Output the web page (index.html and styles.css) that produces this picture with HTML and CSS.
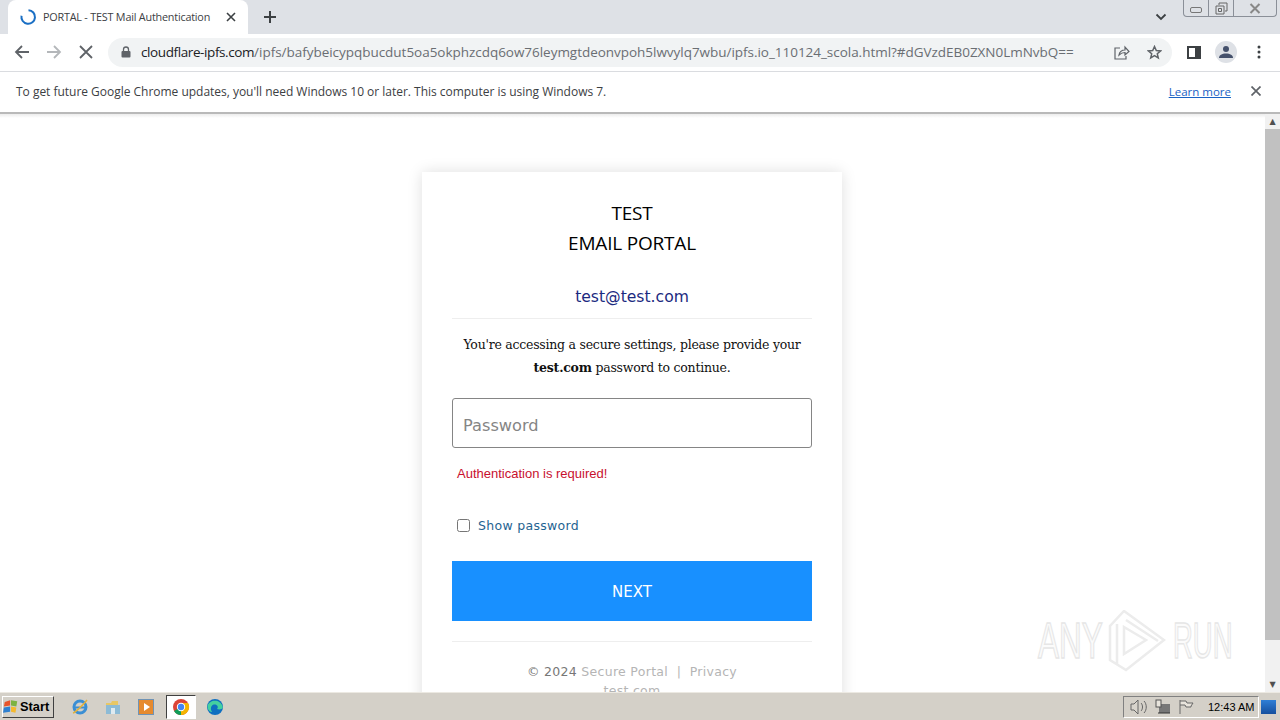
FILE: index.html
```html
<!DOCTYPE html>
<html>
<head>
    <meta http-equiv="Content-Type" content="text/html; charset=UTF-8">
    <title>PORTAL - TEST Mail Authentication</title>
    <link rel="stylesheet" href="styles.css">
</head>
<body>
    <div class="tabstrip">
        <div class="tab">
            <svg class="spinner" width="18" height="18" viewBox="0 0 18 18"><path d="M9.5 2.2a6.8 6.8 0 1 1-7 5.6" fill="none" stroke="#1a6fc4" stroke-width="2"/></svg>
            <span class="tab-title">PORTAL - TEST Mail Authentication</span>
            <svg class="tab-close" width="10" height="10" viewBox="0 0 10 10"><path d="M1 1l8 8M9 1l-8 8" stroke="#3c4043" stroke-width="1.6"/></svg>
        </div>
        <svg class="new-tab" width="14" height="14" viewBox="0 0 14 14"><path d="M7 1v12M1 7h12" stroke="#3c4043" stroke-width="2"/></svg>
        <svg class="tab-list" width="12" height="8" viewBox="0 0 12 8"><path d="M1.5 1.5L6 6l4.500-4.500" fill="none" stroke="#3c4043" stroke-width="1.800"/></svg>
        <div class="window-buttons">
            <div class="win-btn win-min"><svg width="12" height="6" viewBox="0 0 12 6"><rect x="0.500" y="0.500" width="11" height="5" rx="1.500" fill="none" stroke="#777"/></svg></div>
            <div class="win-btn win-max"><svg width="13" height="13" viewBox="0 0 13 13"><path d="M4 3V1h8v8h-2M1 4h8v8H1zM3.500 6.500h3v3h-3z" fill="none" stroke="#666"/></svg></div>
            <div class="win-btn win-close"><svg width="12" height="11" viewBox="0 0 12 11"><path d="M1.500 1l9 9M10.500 1l-9 9" stroke="#888" stroke-width="2"/></svg></div>
        </div>
    </div>

    <div class="toolbar">
        <svg class="nav-icon" width="16" height="16" viewBox="0 0 16 16"><path d="M15 8H2M8 2L2 8l6 6" fill="none" stroke="#5f6368" stroke-width="1.800"/></svg>
        <svg class="nav-icon" width="16" height="16" viewBox="0 0 16 16"><path d="M1 8h13M8 2l6 6-6 6" fill="none" stroke="#b4b7ba" stroke-width="1.800"/></svg>
        <svg class="nav-icon" width="14" height="14" viewBox="0 0 14 14"><path d="M1 1l12 12M13 1L1 13" stroke="#5f6368" stroke-width="1.800"/></svg>
        <div class="omnibox">
            <svg class="lock" width="10" height="12" viewBox="0 0 10 12"><path d="M2.500 5V3.500a2.500 2.500 0 0 1 5 0V5" fill="none" stroke="#5f6368" stroke-width="1.300"/><rect x="0.500" y="5" width="9" height="6.500" rx="1" fill="#5f6368"/></svg>
            <span class="url"><span class="url-host">cloudflare-ipfs.com</span>/ipfs/bafybeicypqbucdut5oa5okphzcdq6ow76leymgtdeonvpoh5lwvylq7wbu/ipfs.io_110124_scola.html?#dGVzdEB0ZXN0LmNvbQ==</span>
            <svg class="omni-icon" width="16" height="15" viewBox="0 0 16 15"><path d="M6 3H1v11h11v-3M5 10c.5-3 3-5 6-5V2l4 4.500-4 3.500V7.500c-2.500 0-4.500 1-6 2.500z" fill="none" stroke="#5f6368" stroke-width="1.200"/></svg>
            <svg class="omni-icon omni-star" width="15" height="15" viewBox="0 0 15 15"><path d="M7.500 1.500l1.800 4 4.300.4-3.300 2.900 1 4.200-3.800-2.300-3.800 2.300 1-4.200L1.400 5.900l4.300-.4z" fill="none" stroke="#5f6368" stroke-width="1.500"/></svg>
        </div>
        <svg class="panel-icon" width="14" height="13" viewBox="0 0 14 13"><rect x="1" y="1" width="12" height="11" fill="none" stroke="#3c4043" stroke-width="2"/><rect x="8" y="1" width="5" height="11" fill="#3c4043"/></svg>
        <div class="avatar"><svg width="14" height="12" viewBox="0 0 14 12"><circle cx="7" cy="3" r="3" fill="#44506b"/><path d="M0 12c0-3 3-4.500 7-4.500s7 1.500 7 4.500z" fill="#44506b"/></svg></div>
        <svg class="menu-dots" width="4" height="14" viewBox="0 0 4 14"><circle cx="2" cy="2" r="1.500" fill="#3c4043"/><circle cx="2" cy="7" r="1.500" fill="#3c4043"/><circle cx="2" cy="12" r="1.500" fill="#3c4043"/></svg>
    </div>

    <div class="infobar">
        <span class="info-text">To get future Google Chrome updates, you'll need Windows 10 or later. This computer is using Windows 7.</span>
        <a class="learn-more">Learn more</a>
        <svg class="info-close" width="10" height="10" viewBox="0 0 10 10"><path d="M.5.500l9 9M9.500.500l-9 9" stroke="#5f6368" stroke-width="1.700"/></svg>
    </div>

    <div class="viewport">
        <div class="page">
            <div class="card">
                <h1 class="title">TEST<br>EMAIL PORTAL</h1>
                <div class="email">test@test.com</div>
                <p class="notice">You're accessing a secure settings, please provide your<br><strong>test.com</strong> password to continue.</p>
                <input class="password" type="password" placeholder="Password">
                <div class="error">Authentication is required!</div>
                <label class="show-password"><input class="check" type="checkbox">Show password</label>
                <button class="next">NEXT</button>
                <div class="footer">
                    <div><span class="copy">© 2024</span> Secure Portal&nbsp; | &nbsp;Privacy</div>
                    <div>test.com</div>
                </div>
            </div>
            <div class="shade"></div>
            <div class="watermark">
                <span class="wm-any">ANY</span>
                <svg width="58" height="62" viewBox="0 0 58 62"><path d="M16 1L56 30 18 60 2 50V16zM16 17l22 13-22 14zM9 14v40M18 10l32 21" fill="none" stroke="#ececec" stroke-width="2.500"/></svg>
                <span class="wm-run">RUN</span>
            </div>
        </div>
        <div class="scrollbar">
            <div class="scroll-arrow">▲</div>
            <div class="scroll-thumb"></div>
            <div class="scroll-arrow">▼</div>
        </div>
    </div>

    <div class="taskbar">
        <div class="start">
            <svg width="16" height="15" viewBox="0 0 18 16"><path d="M2 3l6-2v6l-7 1z" fill="#e8552b"/><path d="M9 1l7 1-1 6-6-1z" fill="#7cb342"/><path d="M1 9l7-1v6l-8 1z" fill="#2f80d0"/><path d="M9 8l6 1-1 6-5-1z" fill="#f5b92e"/></svg>
            <span>Start</span>
        </div>
        <div class="task-icons">
            <div class="task-icon"><svg width="18" height="18" viewBox="0 0 18 18"><circle cx="9" cy="9" r="6" fill="none" stroke="#3b8fd4" stroke-width="3"/><path d="M3 9.500h12" stroke="#3b8fd4" stroke-width="2"/><path d="M2 15C5 14 13 6 16 2" fill="none" stroke="#e3b23c" stroke-width="1.500"/></svg></div>
            <div class="task-icon"><svg width="18" height="18" viewBox="0 0 18 18"><path d="M2 5h5l1-2h6v4H2z" fill="#e8c765"/><path d="M2 7h14v9H2z" fill="#8dbbd6"/><path d="M7 10h4v6H7z" fill="#dfeaf0"/></svg></div>
            <div class="task-icon"><svg width="18" height="18" viewBox="0 0 18 18"><rect x="1.500" y="1.500" width="15" height="15" fill="#e68a2e" stroke="#6f93b5"/><path d="M7 5l6 4-6 4z" fill="#fff"/></svg></div>
            <div class="task-icon task-active"><svg width="18" height="18" viewBox="0 0 18 18"><circle cx="9" cy="9" r="8" fill="#db4437"/><path d="M9 9L2 13a8 8 0 0 0 7 4z" fill="#0f9d58"/><path d="M9 5h7a8 8 0 0 1-7 12z" fill="#f4b400"/><path d="M2 13L5 5h4z" fill="#db4437"/><circle cx="9" cy="9" r="4.200" fill="#fff"/><circle cx="9" cy="9" r="3.200" fill="#4285f4"/></svg></div>
            <div class="task-icon"><svg width="18" height="18" viewBox="0 0 18 18"><circle cx="9" cy="9" r="8" fill="#0f6fc0"/><path d="M1.500 8C3 2 14 0 16.800 9c.3 2-3 3-5.800 2 2-2 0-5-3-4.500C5 7 4 11 6 14c-2.500 0-4.500-2.500-4.500-6z" fill="#45d0a0"/></svg></div>
        </div>
        <div class="tray">
            <svg width="18" height="16" viewBox="0 0 18 16"><path d="M1 5h3l4-4v14l-4-4H1z" fill="#d8d4cc" stroke="#666"/><path d="M11 4c2 2 2 6 0 8M14 2c3 3 3 9 0 12" fill="none" stroke="#666"/></svg>
            <svg width="16" height="16" viewBox="0 0 16 16"><rect x="4" y="5" width="11" height="9" fill="#777"/><rect x="1" y="1" width="5" height="7" fill="#e8e4dc" stroke="#555"/><path d="M3 14h12" stroke="#333"/></svg>
            <svg width="16" height="16" viewBox="0 0 16 16"><path d="M2 1v14M2 2h6l1 2h6l-2 3 0 1H8L7 6H2" fill="#e8e4dc" stroke="#666"/></svg>
            <span class="clock">12:43 AM</span>
        </div>
        <div class="show-desktop"></div>
    </div>
</body>
</html>
```

FILE: styles.css
```css
* {
    box-sizing: border-box;
}

html, body {
    margin: 0;
    height: 100%;
    overflow: hidden;
}

body {
    display: flex;
    flex-direction: column;
    height: 720px;
    font-family: "DejaVu Sans", sans-serif;
    background-color: #fff;
}

/* browser chrome */
.tabstrip {
    display: flex;
    align-items: flex-start;
    height: 34px;
    padding-left: 8px;
    background-color: #dee1e6;
    flex-shrink: 0;
}

.tab {
    display: flex;
    align-items: center;
    width: 240px;
    height: 34px;
    padding-left: 11px;
    background-color: #fff;
    border-radius: 8px 8px 0 0;
}

.spinner {
    flex-shrink: 0;
}

.tab-title {
    margin: 0 0 1px 6px;
    font-family: "Open Sans", sans-serif;
    font-size: 10.800px;
    letter-spacing: -0.200px;
    color: #3c4043;
    white-space: nowrap;
}

.tab-close {
    margin-left: 16px;
    flex-shrink: 0;
}

.new-tab {
    margin: 10px 0 0 15px;
}

.tab-list {
    margin: 13px 0 0 878px;
}

.window-buttons {
    display: flex;
    align-self: flex-start;
    height: 17px;
    margin-left: 16px;
    border: 1px solid #8a8f98;
    border-top: 0;
    border-radius: 0 0 4px 4px;
}

.win-btn {
    display: flex;
    align-items: center;
    justify-content: center;
    height: 16px;
    border-right: 1px solid #8a8f98;
}

.win-min {
    width: 25px;
    padding-top: 3px;
}

.win-max {
    width: 25px;
}

.win-close {
    width: 42px;
    border-right: 0;
}

.toolbar {
    display: flex;
    align-items: center;
    height: 38px;
    padding: 0 0 1px 14px;
    background-color: #fff;
    border-bottom: 1px solid #dadce0;
    flex-shrink: 0;
}

.nav-icon {
    margin-right: 16px;
}

.nav-icon:nth-child(3) {
    margin-left: 1px;
    margin-right: 15px;
}

.omnibox {
    display: flex;
    align-items: center;
    width: 1064px;
    height: 29px;
    padding-left: 13px;
    background-color: #f1f3f4;
    border-radius: 15px;
}

.lock {
    flex-shrink: 0;
}

.url {
    width: 973px;
    margin-left: 10px;
    font-family: "Open Sans", sans-serif;
    font-size: 13.500px;
    letter-spacing: -0.030px;
    color: #6a6e73;
    white-space: nowrap;
}

.url-host {
    letter-spacing: -0.400px;
    color: #202124;
}

.omni-icon {
    flex-shrink: 0;
}

.omni-star {
    margin-left: 17px;
}

.panel-icon {
    margin-left: 15px;
}

.avatar {
    display: flex;
    align-items: center;
    justify-content: center;
    width: 22px;
    height: 22px;
    margin-left: 14px;
    background-color: #dee1e6;
    border-radius: 50%;
}

.menu-dots {
    margin-left: 20px;
}

.infobar {
    display: flex;
    align-items: center;
    height: 42px;
    padding: 0 19px 2px 16px;
    background-color: #fff;
    border-bottom: 2px solid #b9b9b9;
    flex-shrink: 0;
}

.info-text {
    flex: 1;
    font-family: "Open Sans", sans-serif;
    font-size: 12px;
    letter-spacing: -0.020px;
    color: #3c4043;
}

.learn-more {
    margin-right: 20px;
    font-family: "Open Sans", sans-serif;
    font-size: 11.500px;
    color: #1a62c4;
    text-decoration: underline;
}

/* page area */
.viewport {
    display: flex;
    flex: 1;
    min-height: 0;
}

.page {
    position: relative;
    flex: 1;
    overflow: hidden;
    background-color: #fff;
}

.shade {
    position: absolute;
    left: 0;
    right: 0;
    top: 0;
    height: 4px;
    background: linear-gradient(#ececec, #fff);
}

.card {
    width: 420px;
    margin: 58px 0 0 422px;
    padding: 26px 30px 40px;
    background-color: #fff;
    box-shadow: 0 0 14px rgba(0, 0, 0, 0.13);
    text-align: center;
}

.title {
    margin: 0;
    font-family: "Open Sans", sans-serif;
    font-size: 19px;
    font-weight: 400;
    line-height: 30px;
    letter-spacing: -0.200px;
    color: #000;
}

.email {
    height: 61px;
    padding-top: 29px;
    font-size: 15.600px;
    line-height: 20px;
    color: #1b2a80;
    border-bottom: 1px solid #eee;
}

.notice {
    margin: 14px 0 0;
    font-family: "DejaVu Serif", serif;
    font-size: 12.500px;
    line-height: 23px;
    letter-spacing: -0.240px;
    color: #111;
}

.password {
    display: block;
    width: 360px;
    height: 50px;
    margin-top: 19px;
    padding: 4px 10px 0;
    font-family: "DejaVu Sans", sans-serif;
    font-size: 16.200px;
    background-color: #fff;
    border: 1px solid #858585;
    border-radius: 3px;
}

.password::placeholder {
    color: #858585;
}

.error {
    margin-top: 17px;
    padding-left: 5px;
    font-family: "Liberation Sans", sans-serif;
    font-size: 13px;
    line-height: 18px;
    color: #c8102e;
    text-align: left;
}

.show-password {
    display: flex;
    align-items: center;
    margin-top: 34px;
    padding-left: 5px;
    font-size: 12.500px;
    line-height: 18px;
    letter-spacing: 0.300px;
    color: #1f6391;
}

.check {
    width: 13px;
    height: 13px;
    margin: 0 8px 2px 0;
}

.next {
    display: block;
    width: 360px;
    height: 60px;
    margin-top: 26px;
    padding-top: 2px;
    font-family: "DejaVu Sans", sans-serif;
    font-size: 15px;
    color: #fff;
    background-color: #1890ff;
    border: 0;
}

.footer {
    margin-top: 20px;
    padding-top: 20px;
    font-size: 12.500px;
    line-height: 19px;
    letter-spacing: 0.300px;
    color: #b5b5b5;
    border-top: 1px solid #eee;
}

.copy {
    color: #777;
}

.watermark {
    position: absolute;
    left: 1038px;
    top: 496px;
    display: flex;
    align-items: center;
    font-family: "Liberation Sans", sans-serif;
    font-size: 50px;
    color: #fbfbfb;
    -webkit-text-stroke: 1.500px #e6e6e6;
}

.wm-any {
    width: 70px;
    transform: scaleX(0.630);
    transform-origin: left center;
}

.wm-run {
    width: 59px;
    margin-left: 7px;
    transform: scaleX(0.550);
    transform-origin: left center;
}

.scrollbar {
    display: flex;
    flex-direction: column;
    width: 15px;
    background-color: #f1f1f1;
    flex-shrink: 0;
}

.scroll-arrow {
    height: 15px;
    font-size: 8px;
    line-height: 15px;
    text-align: center;
    color: #505050;
}

.scroll-thumb {
    flex: 1;
    margin-bottom: 37px;
    background-color: #c1c1c1;
}

/* windows taskbar */
.taskbar {
    display: flex;
    align-items: center;
    height: 28px;
    padding-left: 2px;
    background-color: #d4d0c8;
    border-top: 1px solid #ece9e2;
    flex-shrink: 0;
}

.start {
    display: flex;
    align-items: center;
    gap: 1px;
    width: 52px;
    height: 22px;
    padding-left: 0;
    font-family: "Liberation Sans", sans-serif;
    font-size: 12.800px;
    font-weight: 700;
    color: #000;
    border: 1px solid;
    border-color: #fff #404040 #404040 #fff;
}

.task-icons {
    display: flex;
    margin-left: 15px;
}

.task-icon {
    display: flex;
    align-items: center;
    justify-content: center;
    width: 22px;
    height: 24px;
    margin-right: 11px;
}

.task-active {
    width: 30px;
    margin: 0 8px 0 -2px;
    background-color: #fff;
    border: 1px solid;
    border-color: #404040 #fff #fff #404040;
}

.tray {
    display: flex;
    align-items: center;
    gap: 7px;
    width: 136px;
    height: 22px;
    margin-left: 886px;
    padding-left: 6px;
    border: 1px solid;
    border-color: #808080 #fff #fff #808080;
}

.clock {
    margin-left: 7px;
    font-family: "Liberation Sans", sans-serif;
    font-size: 11px;
    white-space: nowrap;
    color: #000;
}

.show-desktop {
    width: 15px;
    height: 14px;
    margin-left: 2px;
    background: linear-gradient(#2f7fd6, #154f9e);
}
```
